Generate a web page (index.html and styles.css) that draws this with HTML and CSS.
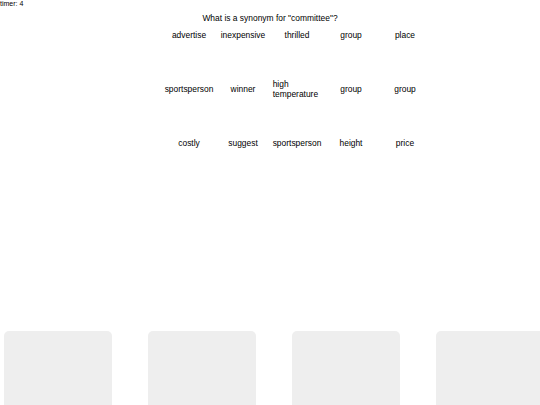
FILE: index.html
```html
<!DOCTYPE html>
<html>
<head>
<meta charset="utf-8">
<link rel="stylesheet" href="styles.css">
</head>
<body>
<div class="timer">timer: 4</div>
<div class="question">What is a synonym for "committee"?</div>
<div class="grid">
  <div class="cell"><span>advertise</span></div>
  <div class="cell"><span>inexpensive</span></div>
  <div class="cell"><span>thrilled</span></div>
  <div class="cell"><span>group</span></div>
  <div class="cell"><span>place</span></div>
  <div class="cell"><span>sportsperson</span></div>
  <div class="cell"><span>winner</span></div>
  <div class="cell"><span>high temperature</span></div>
  <div class="cell"><span>group</span></div>
  <div class="cell"><span>group</span></div>
  <div class="cell"><span>costly</span></div>
  <div class="cell"><span>suggest</span></div>
  <div class="cell"><span>sportsperson</span></div>
  <div class="cell"><span>height</span></div>
  <div class="cell"><span>price</span></div>
</div>
<div class="cards">
  <div class="card"></div>
  <div class="card"></div>
  <div class="card"></div>
  <div class="card card-edge"></div>
</div>
</body>
</html>
```
FILE: styles.css
```css
html, body {
  margin: 0;
  padding: 0;
  overflow: hidden;
  width: 540px;
  height: 405px;
  background: #fff;
}
body {
  font-family: "Liberation Sans", Arial, sans-serif;
  color: #000;
}
.timer {
  font-size: 7px;
  line-height: 8px;
  height: 8px;
}
.question {
  margin-top: 5px;
  font-size: 8.44px;
  line-height: 10px;
  text-align: center;
}
.grid {
  margin-left: 162px;
  display: grid;
  grid-template-columns: repeat(5, 54px);
  grid-auto-rows: 24px;
  row-gap: 30px;
  font-size: 8.44px;
  line-height: 10px;
}
.cell {
  display: flex;
  justify-content: center;
  align-items: center;
  padding: 0 2.7px;
}
.cell span {
  text-align: left;
}
.cards {
  margin-top: 176px;
  padding-left: 4px;
  display: flex;
  gap: 36px;
}
.card {
  flex: 0 0 108px;
  height: 74px;
  background: #eeeeee;
  border-radius: 5px 5px 0 0;
}
.card-edge {
  flex-basis: 104px;
  border-top-right-radius: 0;
}
```
